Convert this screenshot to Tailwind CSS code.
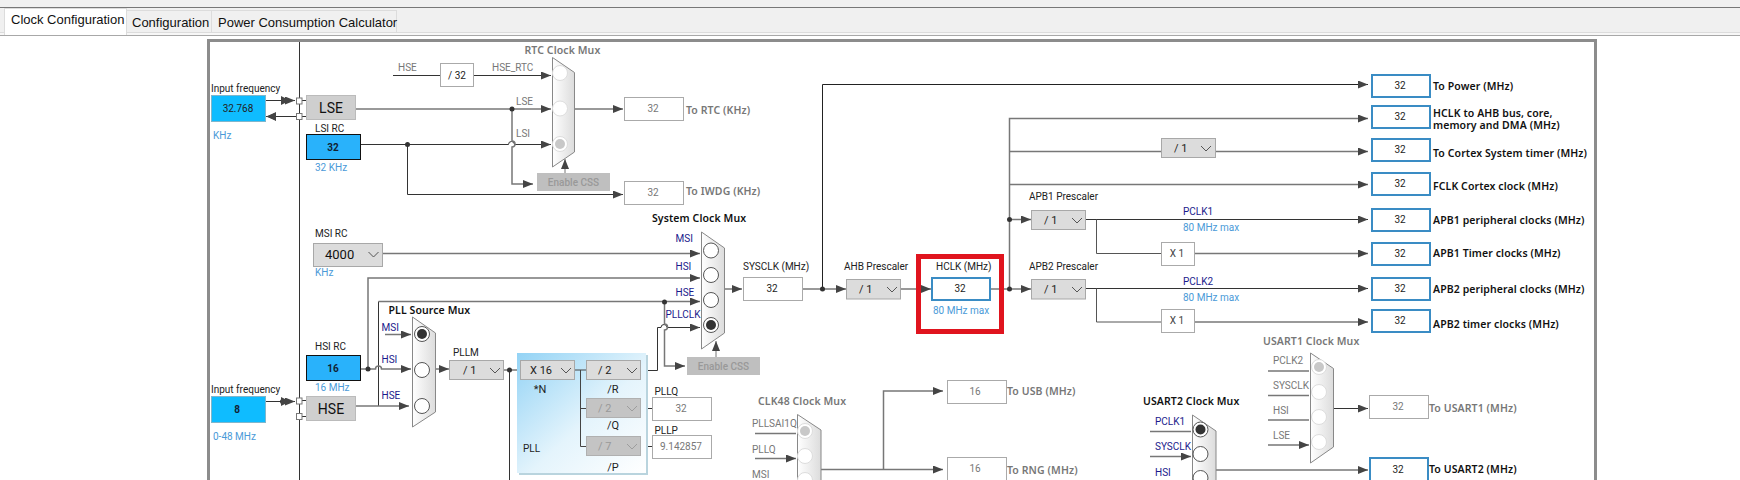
<!DOCTYPE html>
<html lang="en">
<head>
<meta charset="UTF-8">
<title>Clock Configuration</title>
<script src="https://cdn.jsdelivr.net/npm/@tailwindcss/browser@4"></script>
</head>
<body class="bg-white h-[480px] w-[1740px] overflow-hidden font-['Roboto',sans-serif]">
  <!-- top strip + tabs -->
  <div class="h-[8px] bg-[#f0f0f0] border-b border-[#777]"></div>
  <div class="h-[25px] bg-[#f0f0f0] border-b border-[#dcdcdc] flex items-end pl-[4px] whitespace-nowrap text-[#111] font-['Liberation_Sans',sans-serif] text-[13px] leading-[18px]">
    <div class="relative z-10 w-[123px] h-[27px] -mb-[3px] bg-white border border-b-0 border-[#dcdcdc] pl-[6px] pt-[2px]">Clock Configuration</div>
    <div class="w-[85px] h-[22px] bg-[#f0f0f0] border-t border-r border-[#dcdcdc] pl-[5px] pt-[3px]">Configuration</div>
    <div class="w-[185px] h-[22px] bg-[#f0f0f0] border-t border-r border-[#dcdcdc] pl-[6px] pt-[3px]">Power Consumption Calculator</div>
  </div>
  <div class="h-[3px] bg-[#f7f7f7] border-b border-[#a8a8a8]"></div>

  <!-- diagram frame, svg uses page coordinates through its viewBox -->
  <div class="ml-[207px] mt-[3px] w-[1390px] h-[460px] border-[3px] border-[#8c8c8c]">
    <svg class="block" width="1384" height="440" viewBox="210 42 1384 440">
      <defs>
        <marker id="arr" markerUnits="userSpaceOnUse" markerWidth="10" markerHeight="8" refX="10" refY="4" orient="auto"><path d="M0 0L10 4L0 8Z" fill="#444"/></marker>
        <linearGradient id="muxfill" x1="0" x2="1" y1="0" y2="0"><stop offset="0" stop-color="#fff"/><stop offset="1" stop-color="#dcdcdc"/></linearGradient>
        <linearGradient id="pllfill" x1="0" x2="1" y1="0" y2="1"><stop offset="0" stop-color="#93d3f5"/><stop offset="0.55" stop-color="#e4f4fc"/><stop offset="1" stop-color="#fff"/></linearGradient>
        <path id="chev" d="M-5 -3L0 2L5 -3" fill="none" stroke="#555"/>
      </defs>

      <!-- black wires -->
      <g fill="none" stroke="#333" stroke-width="1">
        <path d="M299.5 42V480"/>
        <path d="M822.5 289V84.5H1368" stroke="#222" marker-end="url(#arr)"/>
        <path d="M361 144.5H508.5a3 3 0 0 1 6 0H551" marker-end="url(#arr)"/>
        <path d="M407.5 144.5V194.5H623" marker-end="url(#arr)"/>
        <path d="M393 75.5H440M473.5 75.5H551" marker-end="url(#arr)"/>
        <path d="M266 100.5H295" marker-end="url(#arr)"/>
        <path d="M296 116.5H266" marker-end="url(#arr)"/>
        <path d="M266 401.5H295" marker-end="url(#arr)"/>
        <path d="M378.5 301.5V406"/>
        <path d="M641 370.5H657.5V327.5H661a3 3 0 0 1 6 0H700" marker-end="url(#arr)"/>
        <path d="M509.5 370V480"/>
        <path d="M504 370H520"/>
        <path d="M641 408.5H652M641 446.5H652"/>
        <path d="M1086 219.5H1368" marker-end="url(#arr)"/>
        <path d="M1086 288.5H1368" marker-end="url(#arr)"/>
        <path d="M1096.5 219.5V253.5H1161M1096.5 288.5V322H1161" stroke="#555"/>
        <path d="M1216 470H1368" marker-end="url(#arr)"/>
        <path d="M1333.5 408.5H1368" marker-end="url(#arr)"/>
        <path d="M302 100.5H306M302 116.5H306M302 400.5H306M302 416.5H306"/>
      </g>
      <!-- heavier grey wires -->
      <g fill="none" stroke="#777" stroke-width="1.5">
        <path d="M355 109H551" marker-end="url(#arr)"/>
        <path d="M512 109V141a3 3 0 0 1 0 6V184H533" marker-end="url(#arr)"/>
        <path d="M574 109H623" marker-end="url(#arr)"/>
        <path d="M382 253.5H700" marker-end="url(#arr)"/>
        <path d="M368 369V278H700" marker-end="url(#arr)"/>
        <path d="M378.5 301.5H700" marker-end="url(#arr)"/>
        <path d="M664.5 302V324a3 3 0 0 1 0 6V366H685" marker-end="url(#arr)"/>
        <path d="M361 369H375.5a3 3 0 0 1 6 0H411" marker-end="url(#arr)"/>
        <path d="M355 406H409" marker-end="url(#arr)"/>
        <path d="M385 334.5H411" marker-end="url(#arr)"/>
        <path d="M435 369H449" marker-end="url(#arr)"/>
        <path d="M725 289H742" marker-end="url(#arr)"/>
        <path d="M803 289H846" marker-end="url(#arr)"/>
        <path d="M901 289H931" marker-end="url(#arr)"/>
        <path d="M991 289H1031" marker-end="url(#arr)"/>
        <path d="M1009.5 289V118.5H1368" marker-end="url(#arr)"/>
        <path d="M1009.5 151.5H1161M1216 151.5H1368" marker-end="url(#arr)"/>
        <path d="M1009.5 184.5H1368" marker-end="url(#arr)"/>
        <path d="M1009.5 219.5H1031" marker-end="url(#arr)"/>
        <path d="M1194.5 253.5H1368" marker-end="url(#arr)"/>
        <path d="M1194.5 322H1368" marker-end="url(#arr)"/>
        <path d="M565 173V159" stroke-width="1" marker-end="url(#arr)"/>
        <path d="M716 357V341" stroke-width="1" marker-end="url(#arr)"/>
        <path d="M821 469.5H943" marker-end="url(#arr)"/>
        <path d="M883.5 469.5V391H943" marker-end="url(#arr)"/>
        <path d="M755 433.5H796M755 458.5H796" marker-end="url(#arr)"/>
        <path d="M1150 431.5H1191M1150 456.5H1191" marker-end="url(#arr)"/>
        <path d="M1268 371H1309M1268 395.5H1309M1268 420H1309M1268 445H1309" marker-end="url(#arr)"/>
      </g>
      <g fill="#333">
        <circle cx="512" cy="109" r="2.5"/><circle cx="407.5" cy="144.5" r="2.5"/><circle cx="368" cy="369" r="2.5"/>
        <circle cx="509.5" cy="370" r="2.5"/><circle cx="664.5" cy="302" r="2.5"/><circle cx="822.5" cy="289" r="2.5"/>
        <circle cx="1009.5" cy="289" r="2.5"/><circle cx="1009.5" cy="219.5" r="2.5"/><circle cx="282.5" cy="401.5" r="2.5"/>
      </g>
      <!-- extra arrow heads of the in/out pins -->
      <g fill="#444">
        <path d="M281 96L290 100.5L281 105Z"/><path d="M276 112L267 116.5L276 121Z"/><path d="M281 397L290 401.5L281 406Z"/>
      </g>
      <g fill="#fff" stroke="#777">
        <rect x="296.5" y="98" width="5.5" height="6"/><rect x="296.5" y="113.5" width="5.5" height="6"/>
        <rect x="296.5" y="398" width="5.5" height="6"/><rect x="296.5" y="413.5" width="5.5" height="6"/>
      </g>

      <!-- PLL panel -->
      <rect x="519" y="355" width="129" height="120" fill="#b9d4de"/>
      <rect x="517" y="353" width="129" height="120" fill="url(#pllfill)"/>
      <path d="M575 370H586M580.5 370V446.5H586M580.5 408.5H586" fill="none" stroke="#444"/>

      <!-- muxes -->
      <g stroke="#888" fill="url(#muxfill)">
        <path d="M552.5 57.5L574.5 72.5V152L552.5 167Z"/>
        <path d="M412.5 317L435.5 333V412L412.5 427Z"/>
        <path d="M701.5 232L724.5 248V333L701.5 349Z"/>
        <path d="M797.5 414.5L821 430V500H797.5Z"/>
        <path d="M1192.5 415L1216 431V500H1192.5Z"/>
        <path d="M1310.5 353L1333.5 368.5V447L1310.5 463Z"/>
      </g>
      <!-- radios, active -->
      <g fill="#fff" stroke="#555">
        <circle cx="422" cy="334" r="7.5"/><circle cx="422" cy="370" r="7.5"/><circle cx="422" cy="406" r="7.5"/>
        <circle cx="711" cy="250.5" r="7.5"/><circle cx="711" cy="275" r="7.5"/><circle cx="711" cy="300" r="7.5"/><circle cx="711" cy="325" r="7.5"/>
        <circle cx="1200.5" cy="429.5" r="7.5"/><circle cx="1200.5" cy="454" r="7.5"/><circle cx="1200.5" cy="478" r="7.5"/>
      </g>
      <g fill="#333"><circle cx="422" cy="334" r="5"/><circle cx="711" cy="325" r="5"/><circle cx="1200.5" cy="429.5" r="5"/></g>
      <!-- radios, disabled -->
      <g fill="#fff" stroke="#ddd">
        <circle cx="560" cy="73" r="7.5"/><circle cx="560" cy="108.5" r="7.5"/><circle cx="560" cy="144" r="7.5"/>
        <circle cx="805" cy="431" r="7.5"/><circle cx="805" cy="456" r="7.5"/><circle cx="805" cy="480" r="7.5"/>
        <circle cx="1319" cy="367" r="7.5"/><circle cx="1319" cy="392" r="7.5"/><circle cx="1319" cy="417" r="7.5"/><circle cx="1319" cy="442" r="7.5"/>
      </g>
      <g fill="#c8c8c8"><circle cx="560" cy="144" r="5"/><circle cx="805" cy="431" r="5"/><circle cx="1319" cy="367" r="5"/></g>

      <!-- source blocks -->
      <g fill="#0fbcff" stroke="#7fb6cc">
        <rect x="211.5" y="95.5" width="54" height="26"/>
        <rect x="211.5" y="396.5" width="54" height="26"/>
      </g>
      <g fill="#29b2fb" stroke="#111">
        <rect x="306.5" y="134.5" width="54" height="25"/>
        <rect x="306.5" y="355.5" width="54" height="25"/>
      </g>
      <g fill="#cfcfcf" stroke="#bbb">
        <rect x="306.5" y="95.5" width="49" height="24"/>
        <rect x="306.5" y="396.5" width="49" height="24"/>
      </g>
      <!-- selects -->
      <g fill="#dcdcdc" stroke="#a8a8a8">
        <rect x="313.5" y="243.5" width="69" height="23"/>
        <rect x="449.5" y="360.5" width="54" height="19"/>
        <rect x="520.5" y="360.5" width="54" height="19"/>
        <rect x="586.5" y="360.5" width="54" height="19"/>
        <rect x="846.5" y="279.5" width="54" height="19.5"/>
        <rect x="1031.5" y="210.5" width="54" height="19"/>
        <rect x="1031.5" y="279.5" width="54" height="19.5"/>
        <rect x="1161.5" y="138.5" width="54" height="19"/>
      </g>
      <g fill="#c4c4c4" stroke="#b0b0b0">
        <rect x="586.5" y="398.5" width="54" height="19"/>
        <rect x="586.5" y="436.5" width="54" height="19"/>
      </g>
      <use href="#chev" x="373.5" y="255"/><use href="#chev" x="495" y="371"/><use href="#chev" x="566" y="371"/><use href="#chev" x="632" y="371"/>
      <use href="#chev" x="892" y="290"/><use href="#chev" x="1077" y="221"/><use href="#chev" x="1077" y="290"/><use href="#chev" x="1206" y="149"/>
      <use href="#chev" x="632" y="409" opacity="0.35"/><use href="#chev" x="632" y="447" opacity="0.35"/>
      <!-- grey enable buttons -->
      <rect x="537" y="173" width="73" height="18" fill="#bfbfbf"/>
      <rect x="687" y="357" width="73" height="18" fill="#bfbfbf"/>
      <!-- plain value boxes -->
      <g fill="#fff" stroke="#aaa">
        <rect x="440.5" y="63.5" width="33" height="23"/>
        <rect x="624.5" y="97.5" width="59" height="23"/>
        <rect x="624.5" y="181.5" width="59" height="23"/>
        <rect x="652.5" y="397.5" width="59" height="23"/>
        <rect x="652.5" y="435.5" width="59" height="23"/>
        <rect x="743.5" y="277.5" width="59" height="23"/>
        <rect x="947.5" y="380.5" width="59" height="23"/>
        <rect x="947.5" y="457.5" width="59" height="23"/>
        <rect x="1161.5" y="242.5" width="33" height="23"/>
        <rect x="1161.5" y="309.5" width="33" height="23"/>
        <rect x="1369.5" y="395.5" width="59" height="23"/>
      </g>
      <!-- blue output boxes -->
      <g fill="#fff" stroke="#3a8cc4" stroke-width="2">
        <rect x="932" y="278" width="58" height="22"/>
        <rect x="1372" y="75" width="58" height="22"/>
        <rect x="1372" y="106" width="58" height="22"/>
        <rect x="1372" y="139" width="58" height="22"/>
        <rect x="1372" y="173" width="58" height="22"/>
        <rect x="1372" y="209" width="58" height="22"/>
        <rect x="1372" y="243" width="58" height="22"/>
        <rect x="1372" y="278" width="58" height="22"/>
        <rect x="1372" y="310" width="58" height="22"/>
        <rect x="1370" y="458" width="58" height="24"/>
      </g>
      <!-- highlight -->
      <rect x="918.5" y="256.5" width="83" height="75" fill="none" stroke="#e0141e" stroke-width="5"/>

      <!-- black regular labels -->
      <g class="text-[10px] fill-[#222]">
        <text x="211" y="92">Input frequency</text>
        <text x="211" y="393">Input frequency</text>
        <text x="315" y="132">LSI RC</text>
        <text x="315" y="237">MSI RC</text>
        <text x="315" y="350">HSI RC</text>
        <text x="453" y="356">PLLM</text>
        <text x="743" y="270">SYSCLK (MHz)</text>
        <text x="844" y="270">AHB Prescaler</text>
        <text x="936" y="270">HCLK (MHz)</text>
        <text x="1029" y="270">APB2 Prescaler</text>
        <text x="1029" y="200">APB1 Prescaler</text>
        <text x="523" y="452">PLL</text>
        <text x="654.5" y="395">PLLQ</text>
        <text x="654.5" y="434">PLLP</text>
      </g>
      <g class="text-[11px] fill-[#222]" text-anchor="middle">
        <text x="540" y="393">*N</text>
        <text x="613" y="393">/R</text>
        <text x="613" y="429">/Q</text>
        <text x="613" y="471">/P</text>
      </g>
      <!-- grey regular labels -->
      <g class="text-[10px] fill-[#777]">
        <text x="398" y="71">HSE</text>
        <text x="492" y="71">HSE_RTC</text>
        <text x="516" y="105">LSE</text>
        <text x="516" y="137">LSI</text>
        <text x="752" y="427">PLLSAI1Q</text>
        <text x="752" y="453">PLLQ</text>
        <text x="752" y="478">MSI</text>
        <text x="1273" y="364">PCLK2</text>
        <text x="1273" y="389">SYSCLK</text>
        <text x="1273" y="414">HSI</text>
        <text x="1273" y="439">LSE</text>
      </g>
      <!-- navy signal names -->
      <g class="text-[10px] fill-[#1a1a8c]">
        <text x="381.5" y="331">MSI</text>
        <text x="381.5" y="363">HSI</text>
        <text x="381.5" y="399">HSE</text>
        <text x="675.5" y="242">MSI</text>
        <text x="675.5" y="270">HSI</text>
        <text x="675.5" y="296">HSE</text>
        <text x="665.5" y="318">PLLCLK</text>
        <text x="1183" y="215">PCLK1</text>
        <text x="1183" y="285">PCLK2</text>
        <text x="1155" y="425">PCLK1</text>
        <text x="1155" y="450">SYSCLK</text>
        <text x="1155" y="476">HSI</text>
      </g>
      <!-- blue notes -->
      <g class="text-[10px] fill-[#4a9ad8]">
        <text x="213" y="139">KHz</text>
        <text x="315" y="171">32 KHz</text>
        <text x="315" y="276">KHz</text>
        <text x="315" y="391">16 MHz</text>
        <text x="213" y="440">0-48 MHz</text>
        <text x="933" y="314">80 MHz max</text>
        <text x="1183" y="231">80 MHz max</text>
        <text x="1183" y="301">80 MHz max</text>
      </g>
      <!-- bold mux titles and output labels -->
      <g class="text-[10.5px] font-semibold tracking-[0.1px] fill-[#111] font-['Noto_Sans',sans-serif]">
        <text x="388.5" y="314">PLL Source Mux</text>
        <text x="652" y="222">System Clock Mux</text>
        <text x="1143" y="405">USART2 Clock Mux</text>
        <text x="1433" y="90">To Power (MHz)</text>
        <text x="1433" y="117">HCLK to AHB bus, core,</text>
        <text x="1433" y="128.5">memory and DMA (MHz)</text>
        <text x="1433" y="157">To Cortex System timer (MHz)</text>
        <text x="1433" y="190">FCLK Cortex clock (MHz)</text>
        <text x="1433" y="224">APB1 peripheral clocks (MHz)</text>
        <text x="1433" y="257">APB1 Timer clocks (MHz)</text>
        <text x="1433" y="293">APB2 peripheral clocks (MHz)</text>
        <text x="1433" y="328">APB2 timer clocks (MHz)</text>
        <text x="1429" y="473">To USART2 (MHz)</text>
      </g>
      <g class="text-[10.5px] font-semibold tracking-[0.1px] fill-[#777] font-['Noto_Sans',sans-serif]">
        <text x="524.5" y="54">RTC Clock Mux</text>
        <text x="686" y="114">To RTC (KHz)</text>
        <text x="686" y="195">To IWDG (KHz)</text>
        <text x="758" y="405">CLK48 Clock Mux</text>
        <text x="1007" y="395">To USB (MHz)</text>
        <text x="1007" y="474">To RNG (MHz)</text>
        <text x="843" y="488">I2C1 Clock Mux</text>
        <text x="1263" y="345">USART1 Clock Mux</text>
        <text x="1429" y="412">To USART1 (MHz)</text>
      </g>
      <!-- values -->
      <g class="text-[10px] fill-[#222]" text-anchor="middle">
        <text x="238" y="112">32.768</text>
        <text x="457" y="79">/ 32</text>
        <text x="772" y="292">32</text>
        <text x="960" y="292">32</text>
        <text x="1400" y="89">32</text><text x="1400" y="120">32</text><text x="1400" y="153">32</text><text x="1400" y="187">32</text>
        <text x="1400" y="223">32</text><text x="1400" y="257">32</text><text x="1400" y="292">32</text><text x="1400" y="324">32</text>
        <text x="1398" y="473">32</text>
      </g>
      <g class="text-[10px] fill-[#777]" text-anchor="middle">
        <text x="653" y="112">32</text>
        <text x="653" y="196">32</text>
        <text x="681" y="412">32</text>
        <text x="681" y="450">9.142857</text>
        <text x="975" y="395">16</text>
        <text x="975" y="472">16</text>
        <text x="1398" y="410">32</text>
      </g>
      <g class="text-[10px] fill-[#444]" text-anchor="middle">
        <text x="1177" y="257">X 1</text>
        <text x="1177" y="324">X 1</text>
      </g>
      <g class="text-[10px] font-bold fill-[#123]" text-anchor="middle">
        <text x="333" y="151">32</text>
        <text x="333" y="372">16</text>
        <text x="237" y="413">8</text>
      </g>
      <g class="text-[14px] fill-[#111]" text-anchor="middle">
        <text x="331" y="113">LSE</text>
        <text x="331" y="414">HSE</text>
      </g>
      <text x="325" y="259" class="text-[13px] fill-[#111]">4000</text>
      <g class="text-[11px] fill-[#222]">
        <text x="463" y="374">/ 1</text>
        <text x="530" y="374">X 16</text>
        <text x="598" y="374">/ 2</text>
        <text x="859" y="293">/ 1</text>
        <text x="1044" y="224">/ 1</text>
        <text x="1044" y="293">/ 1</text>
        <text x="1174" y="152">/ 1</text>
      </g>
      <g class="text-[11px] fill-[#999]">
        <text x="598" y="412">/ 2</text>
        <text x="598" y="450">/ 7</text>
      </g>
      <g class="text-[10px] font-medium fill-[#999]" text-anchor="middle">
        <text x="573.5" y="186">Enable CSS</text>
        <text x="723.5" y="370">Enable CSS</text>
      </g>
    </svg>
  </div>
</body>
</html>
